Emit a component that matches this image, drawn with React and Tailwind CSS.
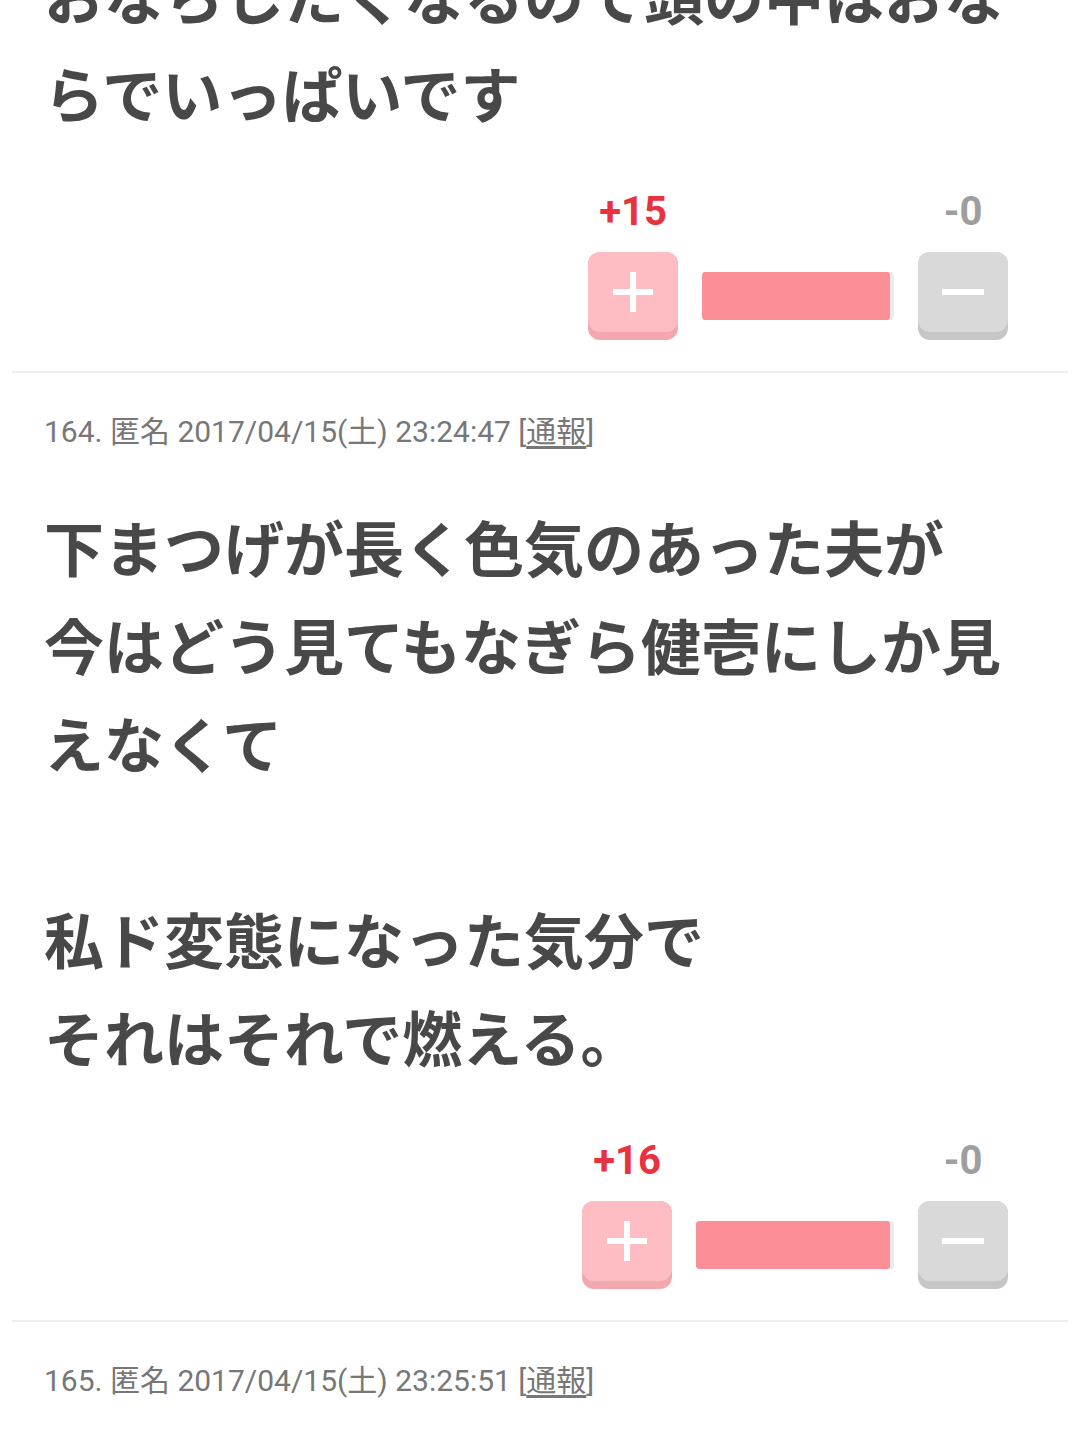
import React from "react";

const bodyFont = { fontFamily: '"Noto Sans CJK JP", "Noto Sans", sans-serif' };

function Meta({ no, date }) {
  return (
    <div
      className="px-[44px] pt-[39px] text-[30px] leading-[40px] text-[#777777]"
      style={{ fontFamily: 'Roboto, "Noto Sans CJK JP", sans-serif' }}
    >
      {no}. 匿名 {date} [<span className="underline underline-offset-4">通報</span>]
    </div>
  );
}

function Vote({ plus, barWidth, top }) {
  return (
    <div
      className="flex items-end justify-end gap-[24px] pr-[72px] pb-[31px]"
      style={{ paddingTop: top }}
    >
      <div className="flex flex-col items-center">
        <div
          className="text-[40px] leading-[44px] font-bold text-[#e8323e] mb-[18px]"
          style={{ fontFamily: 'Roboto, "Liberation Sans", sans-serif' }}
        >
          +{plus}
        </div>
        <div className="w-[90px] h-[88px] rounded-[12px] bg-[#f2a8ae] pb-[8px]">
          <div className="w-full h-full rounded-[12px] bg-[#fdbdc2] flex items-center justify-center">
            <svg width="44" height="44" viewBox="0 0 44 44">
              <path d="M22 2v40M2 22h40" stroke="#ffffff" strokeWidth="6" />
            </svg>
          </div>
        </div>
      </div>
      <div
        className="h-[48px] mb-[20px] rounded-[3px] bg-[#ececec] flex overflow-hidden"
        style={{ width: barWidth }}
      >
        <div className="h-full bg-[#fc8e98] rounded-[3px]" style={{ width: barWidth - 4 }} />
      </div>
      <div className="flex flex-col items-center">
        <div
          className="text-[40px] leading-[44px] font-bold text-[#9e9e9e] mb-[18px]"
          style={{ fontFamily: 'Roboto, "Liberation Sans", sans-serif' }}
        >
          -0
        </div>
        <div className="w-[90px] h-[88px] rounded-[12px] bg-[#c6c6c6] pb-[8px]">
          <div className="w-full h-full rounded-[12px] bg-[#d9d9d9] flex items-center justify-center">
            <svg width="42" height="8" viewBox="0 0 42 8">
              <path d="M0 4h42" stroke="#ffffff" strokeWidth="6" />
            </svg>
          </div>
        </div>
      </div>
    </div>
  );
}

function Body({ lines }) {
  return (
    <div
      className="px-[44px] pt-[45px] text-[60px] leading-[98px] font-bold text-[#484848]"
      style={bodyFont}
    >
      {lines.map((l, i) => (
        <div key={i} className="h-[98px] whitespace-nowrap">
          {l}
        </div>
      ))}
    </div>
  );
}

function Divider() {
  return <div className="mx-[12px] h-[2px] bg-[#eeeeee]" />;
}

export default function App() {
  return (
    <div className="w-[1080px] h-[1451px] bg-white overflow-hidden">
      <div className="-mt-[55px]">
        <div
          className="px-[44px] text-[60px] leading-[98px] font-bold text-[#484848]"
          style={bodyFont}
        >
          <div className="h-[98px] whitespace-nowrap">おならしたくなるので頭の中はおな</div>
          <div className="h-[98px] whitespace-nowrap">らでいっぱいです</div>
        </div>
        <Vote plus={15} barWidth={192} top={49} />
        <Divider />

        <Meta no={164} date="2017/04/15(土) 23:24:47" />
        <Body
          lines={[
            "下まつげが長く色気のあった夫が",
            "今はどう見てもなぎら健壱にしか見",
            "えなくて",
            "",
            "私ド変態になった気分で",
            "それはそれで燃える。",
          ]}
        />
        <Vote plus={16} barWidth={198} top={54} />
        <Divider />

        <Meta no={165} date="2017/04/15(土) 23:25:51" />
      </div>
    </div>
  );
}
